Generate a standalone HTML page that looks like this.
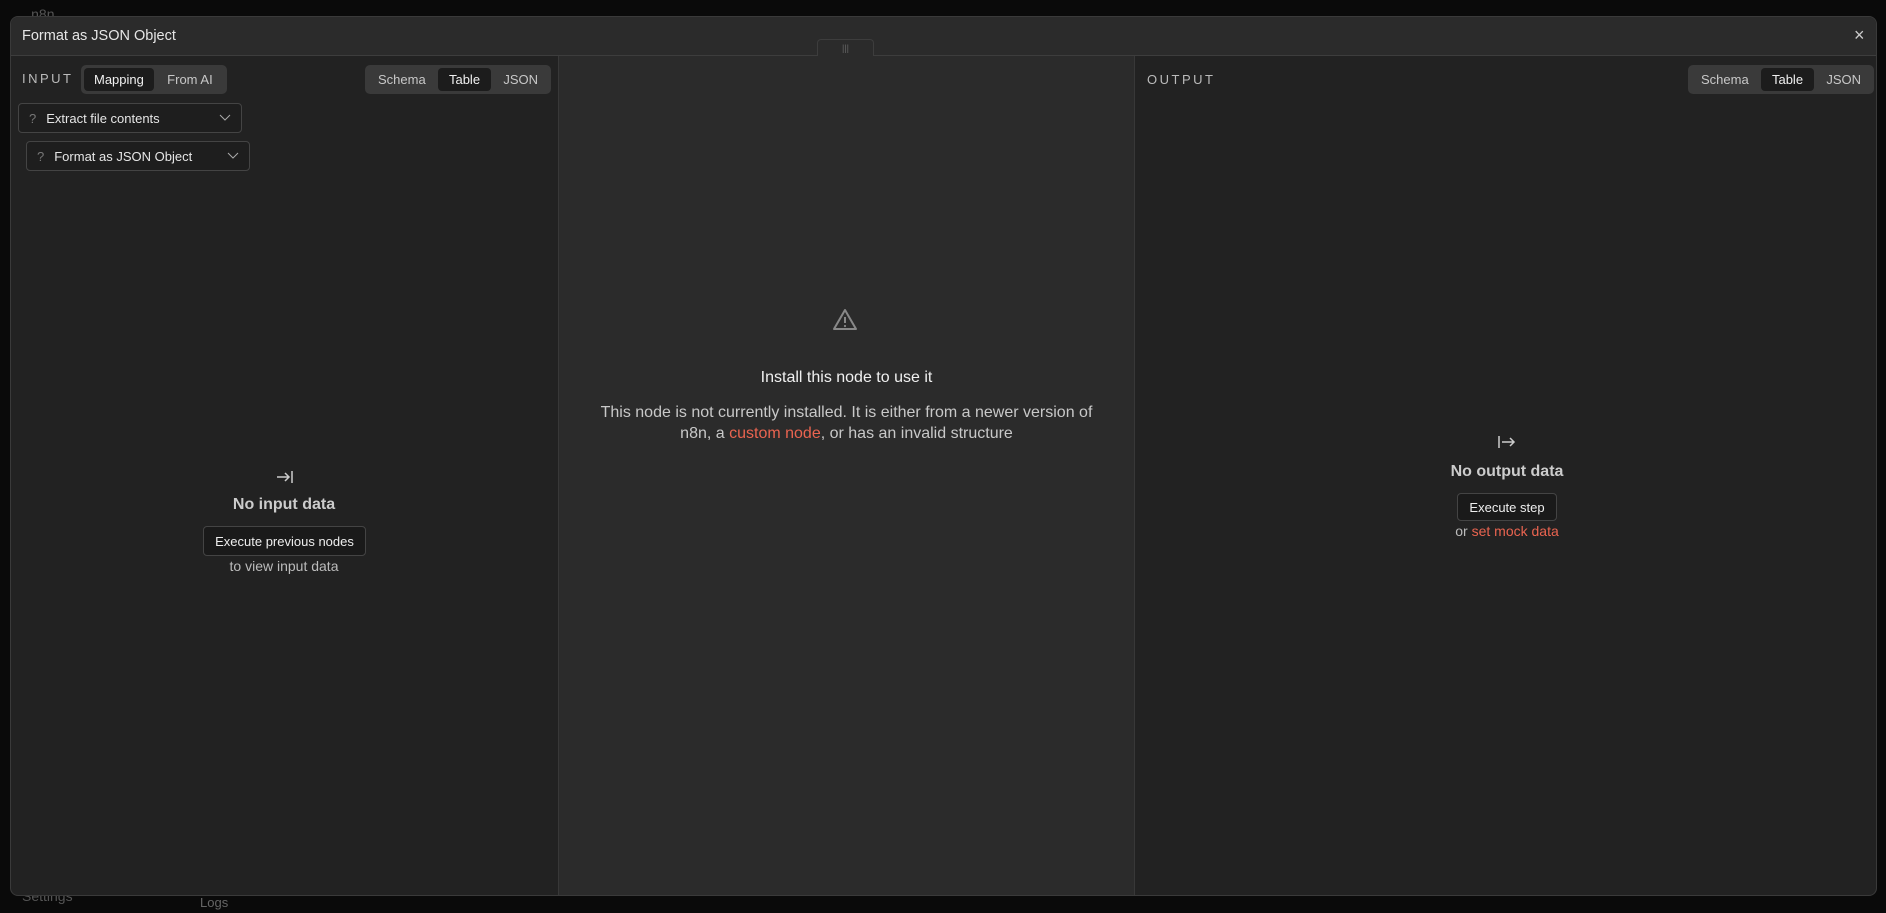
<!DOCTYPE html>
<html><head><meta charset="utf-8"><style>
*{box-sizing:border-box;margin:0;padding:0}
body{width:1886px;height:913px;background:#0a0a0a;font-family:"Liberation Sans",sans-serif;position:relative;overflow:hidden;color:#ddd}
.a{position:absolute}
.modal{left:10px;top:16px;width:1867px;height:880px;background:#222;border:1px solid #3a3a3a;border-radius:8px;overflow:hidden}
.hdr{left:0;top:0;width:100%;height:39px;background:#2b2b2b;border-bottom:1px solid #3d3d3d}
.seg{background:#3a3a3a;border-radius:5px;display:flex;padding:3px;gap:2px;font-size:13px;color:#c8c8c8}
.seg div{padding:0 10px;display:flex;align-items:center;justify-content:center;border-radius:4px;flex:1}
.seg .on{background:#1c1c1c;color:#f0f0f0}
.dd{border:1px solid #444;border-radius:4px;background:#1e1e1e;font-size:13px;color:#e6e6e6;display:flex;align-items:center;padding-left:10px}
.dd .q{color:#777;margin-right:10px}
.btn{border:1px solid #444;border-radius:4px;background:#1a1a1a;font-size:13px;color:#eee;display:flex;align-items:center;justify-content:center}
.c{text-align:center}
</style></head><body>
<div class="a" style="left:0;top:6px;font-size:14px;color:#555">&nbsp;&nbsp;&nbsp;&nbsp;&nbsp;&nbsp;&nbsp;&nbsp;n8n</div>
<div class="a" style="left:200px;top:895px;font-size:13px;color:#666">Logs</div>
<div class="a" style="left:22px;top:888px;font-size:14px;color:#555">Settings</div>
<div class="a modal">
 <div class="a hdr"></div>
 <div class="a" style="left:11px;top:11px;font-size:14.5px;color:#e6e6e6">Format as JSON Object</div>
 <div class="a" style="left:1843px;top:8px;font-size:18px;color:#ccc">×</div>
 <div class="a" style="left:806px;top:22px;width:57px;height:17px;background:#2b2b2b;border:1px solid #3d3d3d;border-bottom:none;border-radius:4px 4px 0 0;text-align:center;font-size:9px;color:#666;line-height:17px">|||</div>
 <div class="a" style="left:547px;top:39px;width:577px;height:842px;background:#2b2b2b;border-left:1px solid #383838;border-right:1px solid #383838"></div>
 <!-- input -->
 <div class="a" style="left:11px;top:54px;font-size:13px;letter-spacing:2.5px;color:#bbb">INPUT</div>
 <div class="a seg" style="left:70px;top:48px;height:29px;width:146px"><div class="on">Mapping</div><div>From AI</div></div>
 <div class="a seg" style="left:354px;top:48px;height:29px;width:186px"><div>Schema</div><div class="on">Table</div><div>JSON</div></div>
 <div class="a dd" style="left:7px;top:86px;width:224px;height:30px"><span class="q">?</span>Extract file contents<svg class="a" style="right:10px;top:10px" width="12" height="8"><path d="M1 1l5 5 5-5" stroke="#aaa" fill="none"/></svg></div>
 <div class="a dd" style="left:15px;top:124px;width:224px;height:30px"><span class="q">?</span>Format as JSON Object<svg class="a" style="right:10px;top:10px" width="12" height="8"><path d="M1 1l5 5 5-5" stroke="#aaa" fill="none"/></svg></div>
 <svg class="a" style="left:265px;top:452px" width="18" height="16"><path d="M1 8h12M9 4l4 4-4 4M16 2v12" stroke="#ccc" stroke-width="1.5" fill="none"/></svg>
 <div class="a c" style="left:173px;top:479px;width:200px;font-size:16px;font-weight:bold;color:#ccc">No input data</div>
 <div class="a btn" style="left:192px;top:509px;width:163px;height:30px">Execute previous nodes</div>
 <div class="a c" style="left:173px;top:541px;width:200px;font-size:14px;color:#bbb">to view input data</div>
 <!-- middle -->
 <svg class="a" style="left:821px;top:291px" width="26" height="24" viewBox="0 0 26 24"><path d="M13 2L2 21h22z" stroke="#888" stroke-width="2" fill="none" stroke-linejoin="round"/><path d="M13 9v6" stroke="#888" stroke-width="2"/><circle cx="13" cy="18" r="1.1" fill="#888"/></svg>
 <div class="a c" style="left:547px;top:352px;width:577px;font-size:16px;color:#f0f0f0">Install this node to use it</div>
 <div class="a c" style="left:572px;top:385px;width:527px;font-size:16px;line-height:21px;color:#c8c8c8">This node is not currently installed. It is either from a newer version of n8n, a <span style="color:#ea6450">custom node</span>, or has an invalid structure</div>
 <!-- output -->
 <div class="a" style="left:1136px;top:55px;font-size:13px;letter-spacing:2.5px;color:#bbb">OUTPUT</div>
 <div class="a seg" style="left:1677px;top:48px;height:29px;width:186px"><div>Schema</div><div class="on">Table</div><div>JSON</div></div>
 <svg class="a" style="left:1486px;top:417px" width="20" height="16"><path d="M2 2v12M5 8h12M13 4l4 4-4 4" stroke="#ccc" stroke-width="1.5" fill="none"/></svg>
 <div class="a c" style="left:1396px;top:446px;width:200px;font-size:16px;font-weight:bold;color:#ccc">No output data</div>
 <div class="a btn" style="left:1446px;top:476px;width:100px;height:28px">Execute step</div>
 <div class="a c" style="left:1396px;top:506px;width:200px;font-size:14px;color:#bbb">or <span style="color:#ea6450">set mock data</span></div>
</div>
</body></html>
